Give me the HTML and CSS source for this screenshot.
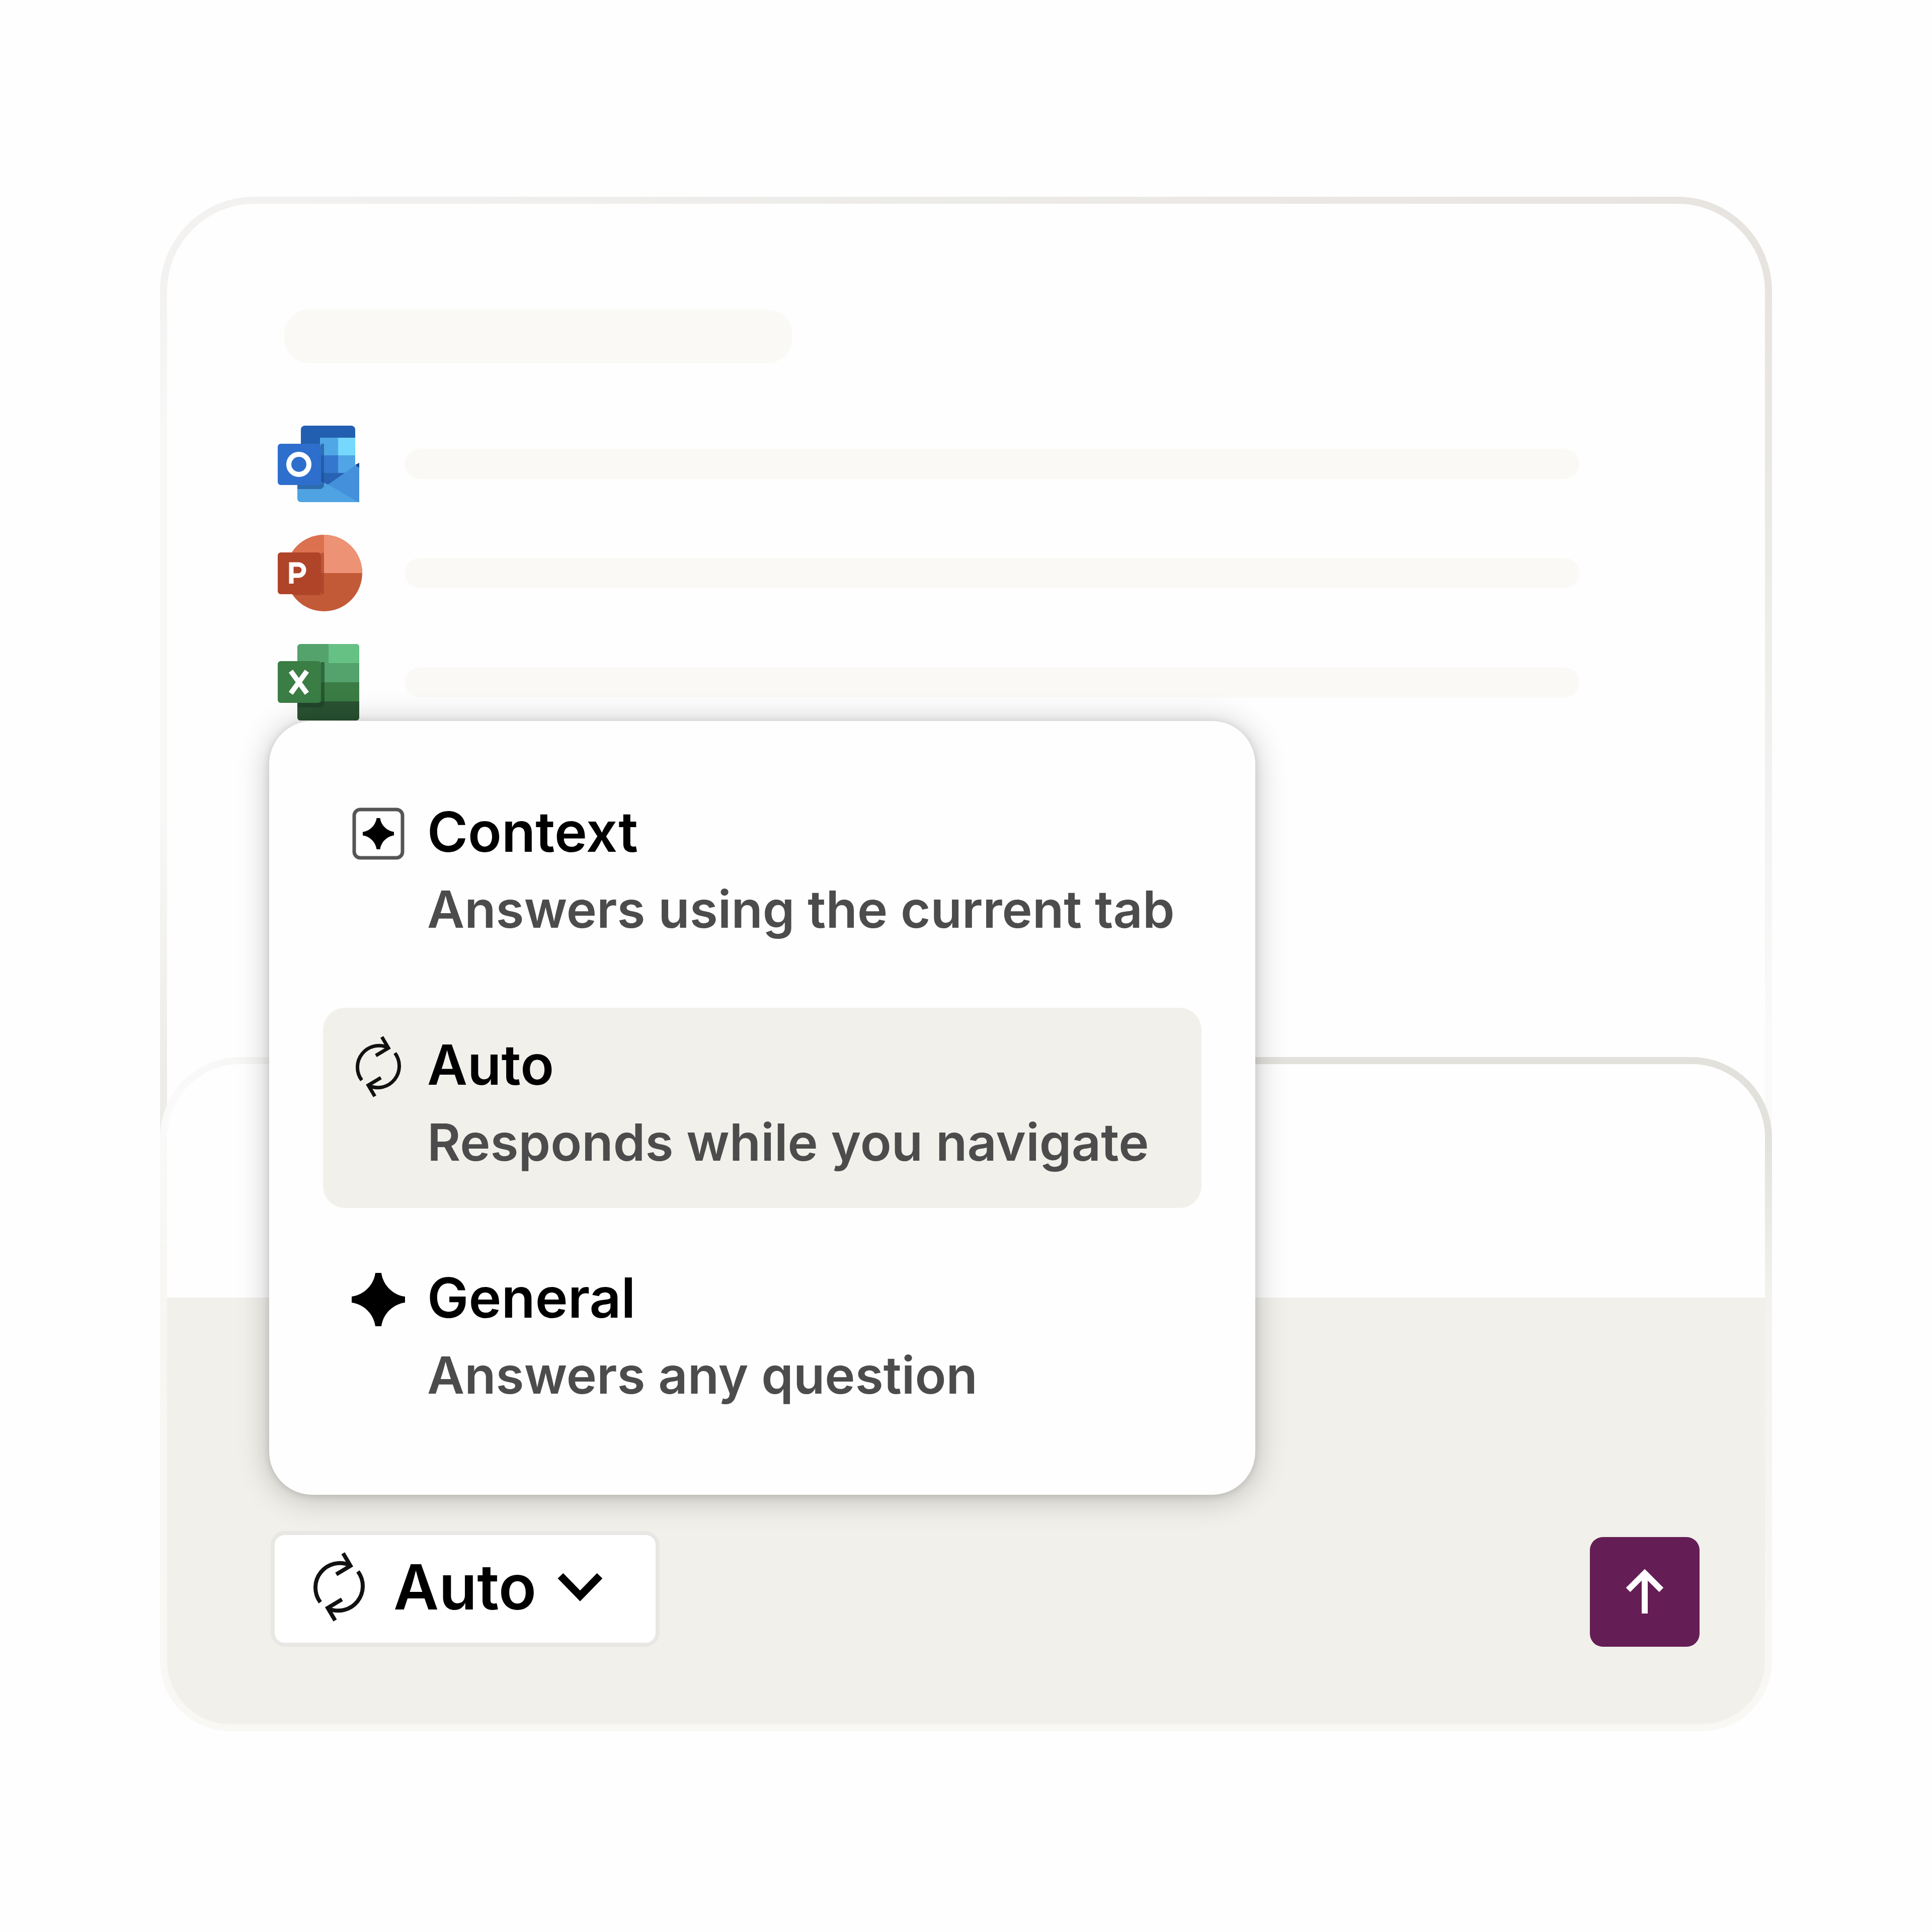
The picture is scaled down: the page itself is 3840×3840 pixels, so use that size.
FILE: index.html
```html
<!DOCTYPE html>
<html lang="en">
<head>
  <meta charset="UTF-8">
  <title>Assistant</title>
  <link rel="stylesheet" href="styles.css">
</head>
<body>
  <svg class="defs" width="0" height="0" aria-hidden="true">
    <symbol id="icon-auto" viewBox="0 0 106 106" overflow="visible">
      <g fill="none" stroke="#111" stroke-width="7">
        <path d="M20 80 A43 43 0 0 1 72 15 M60 -6 L73 16 L48 31"/>
        <path d="M20 80 A43 43 0 0 1 72 15 M60 -6 L73 16 L48 31" transform="rotate(180 53 53)"/>
      </g>
    </symbol>
    <symbol id="icon-star" viewBox="0 0 106 106" overflow="visible">
      <path d="M47 0 H59 C62 24 82 44 106 47 V59 C82 62 62 82 59 106 H47 C44 82 24 62 0 59 V47 C24 44 44 24 47 0 Z"/>
    </symbol>
  </svg>

  <main class="card">
    <div class="content">
      <div class="title-line"></div>

      <div class="row">
        <svg class="app-icon" viewBox="0 0 168 152" role="img" aria-label="Outlook">
          <path d="M46 8 a8 8 0 0 1 8 -8 H146 a8 8 0 0 1 8 8 V86 H46 Z" fill="#235fb0"/>
          <rect x="84" y="24" width="36" height="35" fill="#50a7e5"/>
          <rect x="120" y="24" width="34" height="35" fill="#76d8fc"/>
          <rect x="84" y="59" width="36" height="35" fill="#3577cf"/>
          <rect x="120" y="59" width="34" height="35" fill="#50a5e6"/>
          <path d="M46 94 H136 L100 122 L46 110 Z" fill="#2862b4"/>
          <path d="M100 117 L162 74 V152 H100 Z" fill="#4490db"/>
          <path d="M154 78 L162 74 V84 Z" fill="#17458c"/>
          <path d="M39 90 L100 117 L160 152 H46 a7 7 0 0 1 -7 -7 Z" fill="#4fa3e3"/>
          <path d="M39 118 H80 a6 6 0 0 0 6 -6 V36 H92 V118 a8 8 0 0 1 -8 8 H39 Z" fill="#1d5091" opacity=".65"/>
          <rect y="36" width="86" height="82" rx="6" fill="#2e6fce"/>
          <circle cx="42" cy="77" r="20" fill="none" stroke="#fff" stroke-width="10"/>
        </svg>
        <div class="line"></div>
      </div>

      <div class="row">
        <svg class="app-icon" viewBox="0 0 168 152" role="img" aria-label="PowerPoint">
          <circle cx="92" cy="76" r="76" fill="#c35a37"/>
          <path d="M92 0 A76 76 0 0 1 168 76 H92 Z" fill="#ed9275"/>
          <path d="M92 0 A76 76 0 0 0 16 76 H92 Z" fill="#dc7150"/>
          <path d="M30 118 H92 V36 H86 V120 H36 Z" fill="#8a3018" opacity=".4"/>
          <rect y="35" width="86" height="83" rx="6" fill="#b04428"/>
          <path d="M27 97 V59 H41 a11 11 0 0 1 0 22 H27" fill="none" stroke="#fff" stroke-width="9"/>
        </svg>
        <div class="line"></div>
      </div>

      <div class="row">
        <svg class="app-icon" viewBox="0 0 168 152" role="img" aria-label="Excel">
          <rect x="39" width="123" height="152" rx="6" fill="#54a26c"/>
          <path d="M101 0 H156 a6 6 0 0 1 6 6 V38 H101 Z" fill="#66c185"/>
          <rect x="39" y="76" width="123" height="38" fill="#3b7c44"/>
          <path d="M39 114 H162 V146 a6 6 0 0 1 -6 6 H45 a6 6 0 0 1 -6 -6 Z" fill="#295232"/>
          <path d="M39 116 H86 V36 H93 V118 a8 8 0 0 1 -8 8 H39 Z" fill="#1c3f24" opacity=".6"/>
          <rect y="34" width="86" height="83" rx="6" fill="#3a7d45"/>
          <path d="M26 54 L58 98 M58 54 L26 98" fill="none" stroke="#fff" stroke-width="10"/>
        </svg>
        <div class="line"></div>
      </div>
    </div>

    <form class="composer">
      <textarea class="prompt" aria-label="Message"></textarea>

      <div class="toolbar">
        <div class="mode">
          <div class="menu" role="menu">
            <button class="item" type="button" role="menuitem">
              <svg class="item-icon" viewBox="0 0 106 106" aria-hidden="true">
                <rect x="5" y="5" width="96" height="96" rx="12" fill="none" stroke="#555" stroke-width="7"/>
                <use href="#icon-star" x="22" y="22" width="62" height="62"/>
              </svg>
              <span class="item-text">
                <span class="item-title">Context</span>
                <span class="item-note">Answers using the current tab</span>
              </span>
            </button>
            <button class="item selected" type="button" role="menuitem">
              <svg class="item-icon" aria-hidden="true"><use href="#icon-auto"/></svg>
              <span class="item-text">
                <span class="item-title">Auto</span>
                <span class="item-note">Responds while you navigate</span>
              </span>
            </button>
            <button class="item" type="button" role="menuitem">
              <svg class="item-icon" aria-hidden="true"><use href="#icon-star"/></svg>
              <span class="item-text">
                <span class="item-title">General</span>
                <span class="item-note">Answers any question</span>
              </span>
            </button>
          </div>

          <button class="mode-button" type="button" aria-haspopup="menu" aria-expanded="true">
            <svg class="mode-icon" aria-hidden="true"><use href="#icon-auto"/></svg>
            <span>Auto</span>
            <svg class="chevron" viewBox="0 0 90 60" aria-hidden="true">
              <path d="M6 8 L45 48 L84 8" fill="none" stroke="#000" stroke-width="15"/>
            </svg>
          </button>
        </div>

        <button class="send" type="submit" aria-label="Send">
          <svg class="arrow" viewBox="0 0 76 90" aria-hidden="true">
            <path d="M38 88 V8 M5 41 L38 8 L71 41" fill="none" stroke="#fff" stroke-width="12"/>
          </svg>
        </button>
      </div>
    </form>
  </main>
</body>
</html>
```
FILE: styles.css
```css
* {
  box-sizing: border-box;
}

body {
  margin: 0;
  padding: 391px 318px;
  background: #fefefe;
  font-family: Inter, "Liberation Sans", sans-serif;
}

button {
  border: none;
  font: inherit;
  color: inherit;
  cursor: pointer;
}

.defs {
  position: absolute;
}

.card {
  border: 14px solid transparent;
  border-radius: 188px;
  background:
    linear-gradient(#fefefe, #fefefe) padding-box,
    linear-gradient(90deg, #f3f2f1, #e7e4e0) top / 100% 190px no-repeat border-box,
    linear-gradient(#f3f2f1 6%, #f8f8f7 15%, #f8f8f7 40%, #eeece8 57%) left / 50% 100% no-repeat border-box,
    linear-gradient(#e7e4e0 6%, #ebe9e5 20%, #fafafa 55%) right / 50% 100% no-repeat border-box;
}

.content {
  min-height: 1696px;
  padding: 210px 369px 0 220px;
}

.title-line {
  width: 1010px;
  height: 107px;
  margin: 0 0 124px 13px;
  border-radius: 50px;
  background: #faf9f5;
}

.row {
  display: flex;
  align-items: center;
  gap: 85px;
  margin-bottom: 65px;
}

.app-icon {
  width: 168px;
  height: 152px;
}

.line {
  flex: 1;
  height: 60px;
  border-radius: 30px;
  background: #faf9f5;
}

/* sits on top of the card's own border */
.composer {
  margin: 0 -14px -14px;
  border: 14px solid transparent;
  border-radius: 160px 160px 140px 140px;
  background:
    linear-gradient(#fefefe, #fefefe) padding-box,
    linear-gradient(90deg, #fafafa, #e3e1dc 35%) top / 100% 160px no-repeat border-box,
    linear-gradient(#fafafa, #f7f6f3 40%, #f9f8f5) left / 50% 100% no-repeat border-box,
    linear-gradient(#e3e1dc 12%, #f3f2ee 36%, #f9f8f5) right / 50% 100% no-repeat border-box;
}

.prompt {
  display: block;
  width: 100%;
  height: 464px;
  padding: 60px 160px;
  border: none;
  border-radius: 146px 146px 0 0;
  outline: none;
  resize: none;
  background: #fefefe;
  font: 600 102px/154px Inter, sans-serif;
}

.toolbar {
  display: flex;
  align-items: flex-end;
  justify-content: space-between;
  padding: 464px 130px 154px 206px;
  border-radius: 0 0 126px 126px;
  background: #f1f0ea;
}

.mode {
  position: relative;
}

.mode-button {
  display: flex;
  align-items: center;
  width: 773px;
  height: 230px;
  padding: 0 68px 8px;
  border: 8px solid #e9e7e3;
  border-radius: 28px;
  background: #fff;
  color: #000;
  font-size: 124px;
  font-weight: 600;
}

.mode-icon {
  width: 120px;
  height: 120px;
  margin-right: 48px;
  overflow: visible;
}

.chevron {
  width: 90px;
  height: 60px;
  margin-left: 42px;
}

.send {
  display: flex;
  align-items: center;
  justify-content: center;
  width: 218px;
  height: 218px;
  border-radius: 26px;
  background: #651d55;
}

.arrow {
  width: 76px;
  height: 90px;
}

.menu {
  position: absolute;
  bottom: calc(100% + 72px);
  left: -3px;
  display: flex;
  flex-direction: column;
  gap: 65px;
  width: 1960px;
  padding: 107px;
  border-radius: 86px;
  background: #fefefe;
  box-shadow: 0 2px 16px rgba(0, 0, 0, 0.12), 0 6px 64px rgba(0, 0, 0, 0.24);
}

.item {
  display: flex;
  align-items: flex-start;
  gap: 44px;
  height: 398px;
  padding: 36px 57px;
  border-radius: 44px;
  background: transparent;
  text-align: left;
  white-space: nowrap;
}

.item.selected {
  background: #f1f0ea;
}

.item-icon {
  flex: none;
  width: 106px;
  height: 106px;
  margin-top: 28px;
  overflow: visible;
}

.item-text {
  display: flex;
  flex-direction: column;
  font-weight: 600;
  line-height: 154px;
}

.item-title {
  color: #000;
  font-size: 110px;
}

.item-note {
  color: #4c4c4c;
  font-size: 102px;
}
```
